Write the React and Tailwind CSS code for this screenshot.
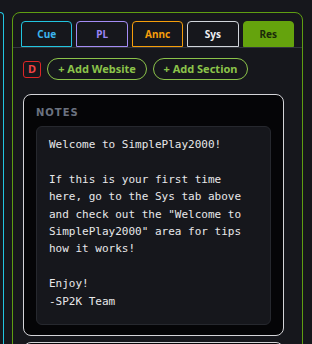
import React from "react";

const tabs = [
  { label: "Cue", cls: "border-[#22c5e0] text-[#3bb4ee]" },
  { label: "PL", cls: "border-[#a48cf5] text-[#9a84f8]" },
  { label: "Annc", cls: "border-[#f59e0b] text-[#f59e0b]" },
  { label: "Sys", cls: "border-[#d1d5db] text-[#eef0f4]" },
  { label: "Res", cls: "border-[#65a30d] bg-[#65a30d] text-[#1b2a0a]" },
];

const lines = [
  "Welcome to SimplePlay2000!",
  "",
  "If this is your first time",
  "here, go to the Sys tab above",
  'and check out the "Welcome to',
  'SimplePlay2000" area for tips',
  "how it works!",
  "",
  "Enjoy!",
  "-SP2K Team",
];

const noto = { fontFamily: '"Noto Sans", "Open Sans", sans-serif' };

export default function App() {
  return (
    <div
      className="w-[312px] h-[344px] overflow-hidden bg-[#16171c] flex pt-3 pr-[9px]"
      style={{ fontFamily: '"DejaVu Sans", Verdana, sans-serif' }}
    >
      <div className="w-[4px] shrink-0 h-[400px] border-t border-r border-[#22c5e0] rounded-tr-md" />
      <div className="ml-2 flex-1 h-[400px] border border-[#5f9e12] rounded-lg">
        <div className="flex gap-1 px-2 pt-2 border-b border-[#33363d]" style={noto}>
          {tabs.map((t) => (
            <div
              key={t.label}
              className={
                "flex-1 h-[26px] flex items-center justify-center border rounded-t-[4px] text-[10px] font-bold " +
                t.cls
              }
            >
              {t.label}
            </div>
          ))}
        </div>
        <div className="pl-[10px] pr-[18px] pt-[10px]">
          <div className="flex items-center gap-[6px]" style={noto}>
            <div className="w-[18px] h-[17px] flex items-center justify-center border border-[#dc2626] rounded-[3px] text-[11px] font-bold text-[#ef4444]">
              D
            </div>
            <div className="h-[22px] w-[100px] flex items-center justify-center border border-[#8bc34a] rounded-full text-[11px] font-bold text-[#8bc34a]">
              + Add Website
            </div>
            <div className="h-[22px] w-[95px] flex items-center justify-center border border-[#8bc34a] rounded-full text-[11px] font-bold text-[#8bc34a]">
              + Add Section
            </div>
          </div>
          <div className="mt-[14px] border border-[#d4d4d8] rounded-lg bg-[#050507] px-3 pt-[11px] pb-[10px]">
            <div className="text-[10px] leading-[14px] font-bold tracking-[1px] text-[#6b7280]">
              NOTES
            </div>
            <div
              className="mt-[6px] bg-[#16171c] border border-[#26282e] rounded-md px-3 pt-[9px] pb-[14px] text-[11px] leading-[17.4px] text-[#e8e8ea] whitespace-pre"
              style={{ fontFamily: '"DejaVu Sans Mono", "Liberation Mono", monospace' }}
            >
              {lines.map((l, i) => (
                <div key={i} className="h-[17.4px]">
                  {l}
                </div>
              ))}
            </div>
          </div>
          <div className="mt-[6px] h-[40px] border border-[#d4d4d8] rounded-lg bg-[#050507]" />
        </div>
      </div>
    </div>
  );
}
